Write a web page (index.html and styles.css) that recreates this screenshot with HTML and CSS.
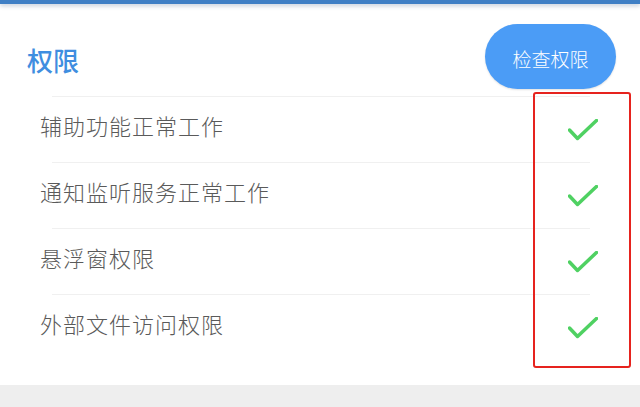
FILE: index.html
```html
<!DOCTYPE html>
<html lang="zh-CN">
<head>
<meta charset="utf-8">
<title>权限</title>
<link rel="stylesheet" href="styles.css">
</head>
<body>
<div class="topbar"></div>
<main class="card">
  <header class="head">
    <h1 class="title">权限</h1>
    <button class="check-btn" type="button">检查权限</button>
  </header>
  <ul class="list">
    <li class="divider"></li>
    <li class="row"><span class="label">辅助功能正常工作</span><svg class="tick" viewBox="0 0 30 22" width="30" height="22"><polyline points="1.5,11 9.5,19.5 28.5,1.5"/></svg></li>
    <li class="divider"></li>
    <li class="row"><span class="label">通知监听服务正常工作</span><svg class="tick" viewBox="0 0 30 22" width="30" height="22"><polyline points="1.5,11 9.5,19.5 28.5,1.5"/></svg></li>
    <li class="divider"></li>
    <li class="row"><span class="label">悬浮窗权限</span><svg class="tick" viewBox="0 0 30 22" width="30" height="22"><polyline points="1.5,11 9.5,19.5 28.5,1.5"/></svg></li>
    <li class="divider"></li>
    <li class="row"><span class="label">外部文件访问权限</span><svg class="tick" viewBox="0 0 30 22" width="30" height="22"><polyline points="1.5,11 9.5,19.5 28.5,1.5"/></svg></li>
  </ul>
</main>
<div class="footer"></div>
<div class="annot"></div>
</body>
</html>
```
FILE: styles.css
```css
* { box-sizing: border-box; }
html, body { margin: 0; padding: 0; }
body {
  width: 640px;
  height: 407px;
  overflow: hidden;
  position: relative;
  background: #ffffff;
  font-family: "Noto Sans CJK SC", "Noto Sans", sans-serif;
}
.topbar {
  height: 4px;
  background: #3f7fc5;
  box-shadow: 0 2px 4px rgba(60, 90, 130, 0.3);
  position: relative;
  z-index: 1;
}
.card {
  padding-bottom: 25px;
}
.head {
  display: flex;
  align-items: center;
  justify-content: space-between;
  padding: 20px 24px 7px 27px;
}
.title {
  margin: 6px 0 0 0;
  font-size: 26px;
  line-height: 1;
  font-weight: 500;
  color: #3f8ee0;
}
.check-btn {
  width: 131px;
  height: 65px;
  border: none;
  border-radius: 33px;
  background: #4b9cf6;
  color: #ffffff;
  font-family: inherit;
  font-size: 19px;
  font-weight: 300;
  line-height: 1;
  padding: 4px 0 0 0;
  box-shadow: 0 1px 2px rgba(0, 0, 0, 0.12);
}
.list {
  list-style: none;
  margin: 0;
  padding: 0;
}
.divider {
  height: 1px;
  margin: 0 50px 0 52px;
  background: #f0f0f0;
}
.row {
  height: 65px;
  display: flex;
  align-items: center;
  justify-content: space-between;
  padding: 0 42px 0 40px;
}
.label {
  font-size: 22px;
  font-weight: 300;
  letter-spacing: 1px;
  color: #5a5a5a;
  line-height: 1;
  margin-top: -10px;
}
.tick {
  display: block;
}
.tick polyline {
  fill: none;
  stroke: #4fd162;
  stroke-width: 3.5;
  stroke-linecap: round;
  stroke-linejoin: round;
}
.footer {
  height: 22px;
  background: #eeeeee;
}
.annot {
  position: absolute;
  left: 533px;
  top: 92px;
  width: 98px;
  height: 276px;
  border: 2px solid #e6231e;
  border-radius: 3px;
}
```
